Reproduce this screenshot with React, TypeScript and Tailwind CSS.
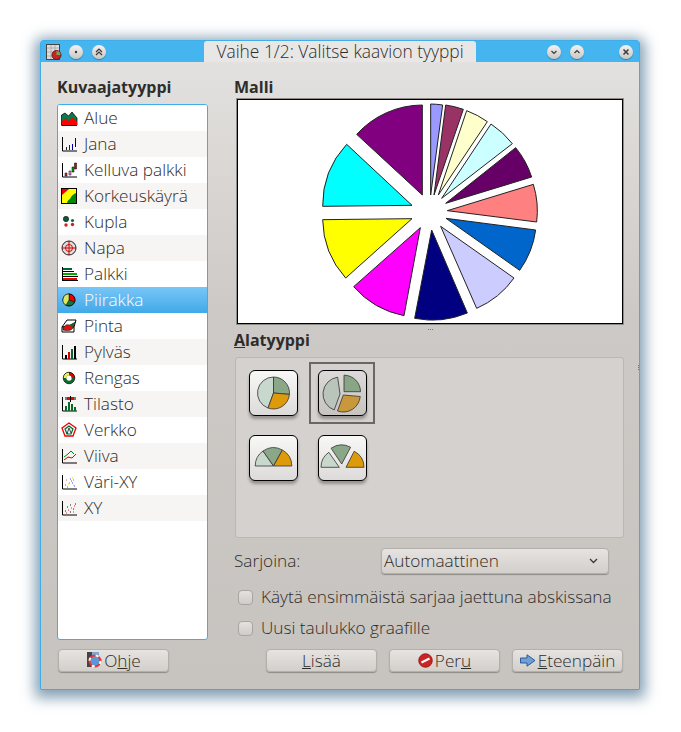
import React from "react";

type P = [number, number];

// wedge from an apex and two rim points, radius taken from the first rim point
const wedgePts = (a: P, b: P, c: P) => {
  const r = Math.hypot(b[0] - a[0], b[1] - a[1]);
  return `M${a[0]} ${a[1]}L${b[0]} ${b[1]}A${r} ${r} 0 0 1 ${c[0]} ${c[1]}Z`;
};

// wedge by angle, clockwise from straight up
const wedge = (cx: number, cy: number, r: number, from: number, to: number) => {
  const pt = (d: number): P => [cx + r * Math.sin((d * Math.PI) / 180), cy - r * Math.cos((d * Math.PI) / 180)];
  const [x1, y1] = pt(from);
  const [x2, y2] = pt(to);
  return `M${cx} ${cy}L${x1} ${y1}A${r} ${r} 0 ${to - from > 180 ? 1 : 0} 1 ${x2} ${y2}Z`;
};

const slices: { c: string; a: P; b: P; d: P }[] = [
  { c: "#9999ff", a: [362, 300], b: [362, 27], d: [398, 30] },
  { c: "#993366", a: [372, 300], b: [407, 30], d: [460, 43] },
  { c: "#ffffcc", a: [385, 300], b: [470, 47], d: [532, 80] },
  { c: "#ccffff", a: [395, 310], b: [543, 87], d: [607, 146] },
  { c: "#660066", a: [407, 325], b: [617, 158], d: [665, 246] },
  { c: "#ff8080", a: [412, 347], b: [670, 268], d: [680, 381] },
  { c: "#0066cc", a: [408, 370], b: [677, 405], d: [629, 526] },
  { c: "#ccccff", a: [392, 394], b: [612, 549], d: [500, 640] },
  { c: "#000080", a: [365, 405], b: [472, 654], d: [314, 670] },
  { c: "#ff00ff", a: [331, 398], b: [282, 662], d: [131, 575] },
  { c: "#ffff00", a: [306, 371], b: [107, 549], d: [38, 374] },
  { c: "#00ffff", a: [306, 331], b: [38, 334], d: [110, 148] },
  { c: "#800080", a: [337, 300], b: [140, 118], d: [337, 30] },
];

const Axes = () => <path d="M1.500 1v14H16" fill="none" stroke="#000" strokeWidth="1" />;

const chartIcons: Record<string, React.ReactNode> = {
  Alue: (
    <>
      <path d="M.5 15V5l3.500-2 3.500 3 3.500-4 5 6v7z" fill="#0a7a4a" stroke="#000" strokeWidth=".7" />
      <path d="M1 15v-4l3.500-3 3 3 4-4 4.500 5v3z" fill="#f00" />
      <path d="M.5 15.500H16" stroke="#000" />
    </>
  ),
  Jana: (
    <>
      <Axes />
      <path d="M5.500 14v-3M8.500 14v-5" stroke="#222" />
      <path d="M11.500 14V8M14.500 11V2" stroke="#00a" />
    </>
  ),
  "Kelluva palkki": (
    <>
      <Axes />
      <path d="M4 11h2v3H4z" fill="#d33" stroke="#000" strokeWidth=".5" />
      <path d="M8 9h2v4H8z" fill="#e8d" stroke="#000" strokeWidth=".5" />
      <path d="M11 5h2v5h-2z" fill="#0a0" stroke="#000" strokeWidth=".5" />
      <path d="M13.500 1h2v6h-2z" fill="#d00" stroke="#000" strokeWidth=".5" />
    </>
  ),
  Korkeuskäyrä: (
    <>
      <rect x=".5" y=".5" width="15" height="15" fill="#ff0" stroke="#000" />
      <path d="M1 1h7L1 7z" fill="#e00" />
      <path d="M15 5v10H6c1-4 3-3 4-6 1-2 3-3 5-4z" fill="#080" />
    </>
  ),
  Kupla: (
    <>
      <circle cx="5" cy="5" r="2.700" fill="#0a5a3a" stroke="#000" strokeWidth=".5" />
      <circle cx="11.500" cy="6.500" r="1.600" fill="#0a6a3a" />
      <circle cx="5" cy="11" r="1.700" fill="#c22" />
      <circle cx="11.500" cy="10.500" r="1.700" fill="#c22" />
    </>
  ),
  Napa: (
    <>
      <circle cx="8" cy="8" r="7" fill="#ddd" stroke="#222" />
      <circle cx="8" cy="8" r="3.500" fill="none" stroke="#d00" />
      <path d="M8 1v14M1 8h14" stroke="#c00" />
    </>
  ),
  Palkki: (
    <>
      <path d="M1.500 1v14" fill="none" stroke="#000" />
      <path d="M2 2h9v2H2z" fill="#063" />
      <path d="M2 5h11v1H2z" fill="#000" />
      <path d="M2 7h14v2H2z" fill="#0a0" />
      <path d="M2 10h15v1H2z" fill="#000" />
      <path d="M2 12h14v2H2z" fill="#e00" />
      <path d="M2 14.500h15" stroke="#000" />
    </>
  ),
  Piirakka: (
    <>
      <circle cx="8" cy="8" r="6" fill="#0a7a3a" stroke="#000" />
      <path d="M8 8V2a6 6 0 0 1 5.600 8z" fill="#e00" stroke="#000" strokeWidth=".5" />
      <path d="M8 8l-3 5.200A6 6 0 0 1 8 2z" fill="#dde860" stroke="#000" strokeWidth=".5" />
    </>
  ),
  Pinta: (
    <>
      <path d="M1 9l5-7h9l-2 7z" fill="#fff" stroke="#000" />
      <path d="M1 9h12v5H1z" fill="#fff" stroke="#000" />
      <path d="M2 10c2-3 4-4 6-3s4-1 6-3l-2 6c-2 3-6 3-10 2z" fill="#d11" stroke="#000" strokeWidth=".5" />
      <path d="M8 7l6-3-2 5z" fill="#0a6a2a" />
    </>
  ),
  Pylväs: (
    <>
      <Axes />
      <path d="M4 11h2v4H4z" fill="#000" />
      <path d="M7 8h2v7H7z" fill="#d00" />
      <path d="M10 5h2v10h-2z" fill="#063" />
      <path d="M13 2h2v13h-2z" fill="#000" />
    </>
  ),
  Rengas: (
    <>
      <circle cx="8" cy="8" r="4.200" fill="none" stroke="#0a6a2a" strokeWidth="3" />
      <path d="M8 3.800a4.200 4.200 0 0 1 4.200 4.200" fill="none" stroke="#d00" strokeWidth="3" />
      <path d="M3.800 8a4.200 4.200 0 0 1 4.200-4.200" fill="none" stroke="#ee5" strokeWidth="3" />
      <circle cx="8" cy="8" r="5.800" fill="none" stroke="#000" strokeWidth=".7" />
    </>
  ),
  Tilasto: (
    <>
      <Axes />
      <path d="M4 10h2v5H4zM7 6h2v9H7zM10 8h2v7h-2zM13 11h2v4h-2z" fill="#0a6a2a" />
      <path d="M6 1h7v3H6z" fill="#e00" />
      <path d="M9.500 0v6M5 1v3M14 1v3" stroke="#000" />
    </>
  ),
  Verkko: (
    <>
      <path d="M8 1l7 5-3 8H4L1 6z" fill="none" stroke="#e00" strokeWidth="1.300" />
      <path d="M8 4l4 3-2 5H6L4 7z" fill="#dfe" stroke="#063" strokeWidth="1.200" />
      <path d="M8 6l-2 6M8 6l2 5" stroke="#000" strokeWidth=".7" />
    </>
  ),
  Viiva: (
    <>
      <Axes />
      <path d="M3 12l4-3 4 1 4-4" fill="none" stroke="#d00" />
      <path d="M3 9l4-3 3-3 3 3" fill="none" stroke="#080" />
    </>
  ),
  "Väri-XY": (
    <>
      <Axes />
      <path d="M4 11h1M9 5h1M11 9h1M13 12h1" stroke="#44f" />
      <path d="M5 6h1M8 9h1M12 6h1" stroke="#f44" />
      <path d="M7 10h1M11 4h1M12 11h1" stroke="#dd0" />
      <path d="M6 13h1M10 7h1" stroke="#0a0" />
    </>
  ),
  XY: (
    <>
      <Axes />
      <path d="M4 11h1M6 7h1M9 12h1M9 5h1M12 9h1M14 4h1" stroke="#111" />
      <path d="M5 13h1M7 10h1M10 8h1M12 12h1M13 6h1" stroke="#e22" />
    </>
  ),
};

const types = Object.keys(chartIcons);

const ChartIcon = ({ name }: { name: string }) => (
  <svg width="17" height="16" viewBox="0 0 17 16" className="shrink-0">
    {chartIcons[name]}
  </svg>
);

const CircleBtn = ({ children }: { children: React.ReactNode }) => (
  <div className="w-[14px] h-[14px] rounded-full bg-gradient-to-b from-[#f4f3f2] to-[#c9c6c3] shadow-[0_1px_1px_rgba(0,0,0,0.3)] flex items-center justify-center">
    <svg width="10" height="10" viewBox="0 0 10 10" fill="none" stroke="#3a3a3a" strokeWidth="1.200">
      {children}
    </svg>
  </div>
);

const PushButton = ({ children }: { children: React.ReactNode }) => (
  <button className="w-[111px] h-[23px] rounded-[4px] border border-[#b3afab] bg-gradient-to-b from-[#e6e3e0] to-[#d3cfcb] shadow-[0_1px_1px_rgba(0,0,0,0.3)] flex items-center justify-center gap-[2px] text-[17.200px] font-light text-[#2e2d2a]">
    {children}
  </button>
);

const SubButton = ({ active, children }: { active?: boolean; children: React.ReactNode }) => (
  <div className="relative w-[49px] h-[46px]">
    {active && <div className="absolute -left-[9px] -top-[8px] w-[66px] h-[62px] border-2 border-[#6a6866]" />}
    <div
      className={`relative w-full h-full rounded-[6px] border border-black shadow-[0_3px_3px_rgba(0,0,0,0.3)] bg-gradient-to-b ${
        active ? "from-[#dcdad8] to-[#c6c3c0]" : "from-[#f8f8f7] to-[#dddbd9]"
      }`}
    >
      <svg width="49" height="46" viewBox="0 0 49 46" className="absolute -left-px -top-px" stroke="#333" strokeWidth=".8">
        {children}
      </svg>
    </div>
  </div>
);

const CheckRow = ({ label }: { label: string }) => (
  <div className="h-[20px] flex items-center pl-[3px] gap-[8px]">
    <div className="w-[15px] h-[15px] rounded-[4px] border border-[#a8a4a0] bg-gradient-to-b from-[#e4e1de] to-[#d0ccc8]" />
    <span className="text-[17.200px] font-light text-[#2e2d2a]">{label}</span>
  </div>
);

const Dot = () => <div className="w-px h-px bg-[#777]" />;

export default function App() {
  return (
    <div className="w-[681px] h-[732px] bg-white pt-[40px] pl-[40px] font-['Open_Sans',sans-serif] overflow-hidden">
      <div className="w-[600px] h-[650px] flex flex-col border border-[#3daee9] rounded-t-[3px] shadow-[0_3px_14px_5px_rgba(50,95,130,0.6)]">
        {/* title bar */}
        <div className="h-[21px] shrink-0 bg-[#45b5f0] flex items-center pl-[5px] pr-[6px]">
          <svg width="16" height="18" viewBox="0 0 16 18" className="shrink-0">
            <rect x=".5" y="1.500" width="13" height="15" fill="#ddd" stroke="#444" />
            <path d="M1 5h12M1 9h12M1 13h12M5 2v14M9 2v14" stroke="#999" strokeWidth=".6" />
            <circle cx="10.500" cy="12" r="4.500" fill="#c22" stroke="#711" />
            <path d="M10.500 12V8a4 4 0 0 1 4 4z" fill="#6a6" />
          </svg>
          <div className="ml-[7px] flex gap-[9px]">
            <CircleBtn>
              <circle cx="5" cy="5" r=".6" fill="#333" />
            </CircleBtn>
            <CircleBtn>
              <path d="M2 5l3-3 3 3M2 8l3-3 3 3" />
            </CircleBtn>
          </div>
          <div className="ml-[98px] w-[272px] h-[21px] rounded-t-[3px] bg-[#e9e7e5] flex items-center justify-center text-[17.400px] font-light text-[#2e2d2a]">
            Vaihe 1/2: Valitse kaavion tyyppi
          </div>
          <div className="ml-[71px] flex gap-[9px]">
            <CircleBtn>
              <path d="M2.500 4L5 6.500 7.500 4" />
            </CircleBtn>
            <CircleBtn>
              <path d="M2.500 6L5 3.500 7.500 6" />
            </CircleBtn>
          </div>
          <div className="ml-auto">
            <CircleBtn>
              <path d="M2.500 2.500l5 5M7.500 2.500l-5 5" strokeWidth="1.500" />
            </CircleBtn>
          </div>
        </div>

        {/* dialog body */}
        <div className="relative flex-1 flex flex-col px-[16px] bg-gradient-to-b from-[#e3e1df] via-[#cdc9c6] via-40% to-[#c7c3bf]">
          <div className="flex pt-[16px] gap-[27px]">
            <div className="w-[151px] shrink-0">
              <div className="h-[18px] mb-[8px] flex items-center text-[16px] font-bold text-[#2e2d2a]">Kuvaajatyyppi</div>
              <div className="h-[536px] rounded-[3px] border border-[#3daee9] bg-white overflow-hidden">
                {types.map((t, i) => (
                  <div
                    key={t}
                    className={`h-[26px] flex items-center pl-[3px] gap-[6px] text-[17.200px] font-light ${
                      t === "Piirakka"
                        ? "bg-gradient-to-b from-[#78c6f6] to-[#3fa9e8] text-white"
                        : i % 2
                          ? "bg-[#f7f5f3] text-[#2e2d2a]"
                          : "bg-white text-[#2e2d2a]"
                    }`}
                  >
                    <ChartIcon name={t} />
                    <span>{t}</span>
                  </div>
                ))}
              </div>
            </div>

            <div className="w-[389px] shrink-0">
              <div className="h-[18px] mb-[2px] -ml-px flex items-center text-[16px] font-bold text-[#2e2d2a]">Malli</div>
              <div className="h-[227px] ml-px border border-[#8e8c8a]">
                <div className="h-full border border-black bg-white">
                  <svg viewBox="-216 15 1152 669" className="w-full h-full" strokeLinejoin="round">
                    {slices.map((s) => (
                      <path key={s.c} d={wedgePts(s.a, s.b, s.d)} fill={s.c} stroke="#222" strokeWidth="3" />
                    ))}
                  </svg>
                </div>
              </div>
              <div className="h-[6px] flex justify-center items-center gap-px pt-[2px] pl-[2px]">
                <Dot />
                <Dot />
                <Dot />
              </div>
              <div className="h-[18px] mb-[8px] -ml-px flex items-center text-[16px] font-bold text-[#2e2d2a]">
                <span className="underline">A</span>latyyppi
              </div>
              <div className="h-[181px] rounded-[3px] border border-[#bab6b2] bg-[#d5d1ce] pl-[13px] pt-[12px]">
                <div className="grid grid-cols-[49px_49px] grid-rows-[46px_46px] gap-x-[20px] gap-y-[19px] w-fit">
                  <SubButton>
                    <path d={wedge(24.500, 23, 16, 200, 360)} fill="#c8d8cc" />
                    <path d={wedge(24.500, 23, 16, 0, 95)} fill="#8aa888" />
                    <path d={wedge(24.500, 23, 16, 95, 200)} fill="#dd9a0a" />
                  </SubButton>
                  <SubButton active>
                    <path d={wedge(22, 24, 17, 200, 352)} fill="#b9c5bb" />
                    <path d={wedge(26, 21.700, 16.500, 0, 90)} fill="#88a586" />
                    <path d={wedge(25.300, 25, 17, 95, 200)} fill="#c9983a" />
                  </SubButton>
                  <SubButton>
                    <path d={wedge(24.500, 31, 18.300, 270, 325)} fill="#c8d8cc" />
                    <path d={wedge(24.500, 31, 18.300, 325, 389)} fill="#8aa888" />
                    <path d={wedge(24.500, 31, 18.300, 29, 90)} fill="#dd9a0a" />
                  </SubButton>
                  <SubButton>
                    <path d={wedge(21.300, 32.300, 18.300, 270, 325)} fill="#c8d8cc" />
                    <path d={wedge(23.700, 29, 19, 326, 388)} fill="#8aa888" />
                    <path d={wedge(28, 32.300, 18, 27, 90)} fill="#dd9a0a" />
                  </SubButton>
                </div>
              </div>
              <div className="mt-[10px] h-[26px] flex items-center">
                <span className="w-[147px] -ml-px text-[17.200px] font-light text-[#2e2d2a]">Sarjoina:</span>
                <div className="w-[228px] h-[26px] rounded-[4px] border border-[#b3afab] bg-gradient-to-b from-[#e6e3e0] to-[#d3cfcb] shadow-[0_1px_1px_rgba(0,0,0,0.3)] flex items-center justify-between pl-[2px] pr-[10px] text-[17.200px] font-light text-[#2e2d2a]">
                  Automaattinen
                  <svg width="9" height="6" viewBox="0 0 9 6" fill="none" stroke="#3c3b37" strokeWidth="1.300">
                    <path d="M1 1l3.500 3.500L8 1" />
                  </svg>
                </div>
              </div>
              <div className="mt-[13px]">
                <CheckRow label="Käytä ensimmäistä sarjaa jaettuna abskissana" />
              </div>
              <div className="mt-[11px]">
                <CheckRow label="Uusi taulukko graafille" />
              </div>
            </div>
          </div>

          {/* footer buttons */}
          <div className="mt-[9px] pl-px flex">
            <PushButton>
              <svg width="16" height="17" viewBox="0 0 16 17">
                <rect x="1" y="0" width="6" height="15" fill="#444" />
                <rect x="6" y="0" width="7" height="4" fill="#7aa8d8" />
                <circle cx="9" cy="9" r="5.500" fill="#5a96d8" stroke="#e33" strokeWidth="2" />
                <circle cx="9" cy="9" r="5.500" fill="none" stroke="#fff" strokeWidth="2" strokeDasharray="3 5.640" />
              </svg>
              <span>
                O<span className="underline">h</span>je
              </span>
            </PushButton>
            <div className="ml-[97px] flex gap-[12px]">
              <PushButton>
                <span>
                  <span className="underline">L</span>isää
                </span>
              </PushButton>
              <PushButton>
                <svg width="15" height="15" viewBox="0 0 15 15">
                  <circle cx="7.500" cy="7.500" r="6.800" fill="#cc2222" stroke="#8a1414" strokeWidth=".8" />
                  <path d="M3.500 9.500l8-4" stroke="#fff" strokeWidth="2.200" />
                </svg>
                <span>
                  Per<span className="underline">u</span>
                </span>
              </PushButton>
              <PushButton>
                <svg width="16" height="13" viewBox="0 0 16 13">
                  <path d="M.5 4h6.500V.8l8 5.700-8 5.700V9H.5z" fill="#6f9fd8" stroke="#2c5a94" />
                </svg>
                <span>
                  <span className="underline">E</span>teenpäin
                </span>
              </PushButton>
            </div>
          </div>
          <div className="absolute right-0 top-[303px] flex flex-col gap-px">
            <Dot />
            <Dot />
            <Dot />
          </div>
        </div>
      </div>
    </div>
  );
}
